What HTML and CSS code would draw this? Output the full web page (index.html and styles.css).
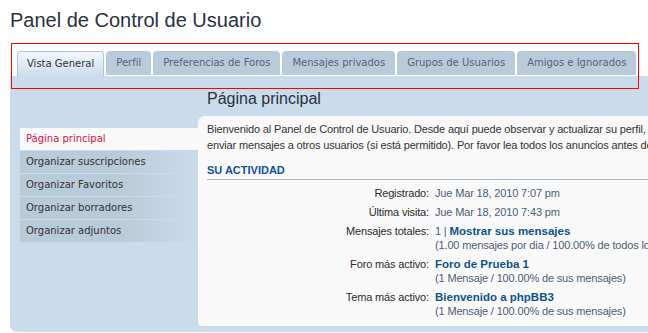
FILE: index.html
```html
<!DOCTYPE html>
<html lang="es">

<head>
  <meta charset="UTF-8" />
  <meta name="viewport" content="width=device-width, initial-scale=1.0" />
  <title>Panel de Control de Usuario</title>
  <link rel="stylesheet" href="styles.css">
</head>

<body>
  <div class="wrap">
    <h1>Panel de Control de Usuario</h1>

    <div class="tabs">
      <a class="tab active" href="#">Vista General</a>
      <a class="tab" href="#">Perfil</a>
      <a class="tab" href="#">Preferencias de Foros</a>
      <a class="tab" href="#">Mensajes privados</a>
      <a class="tab" href="#">Grupos de Usuarios</a>
      <a class="tab" href="#">Amigos e Ignorados</a>
    </div>

    <div class="panel">
      <ul class="menu">
        <li class="active">Página principal</li>
        <li>Organizar suscripciones</li>
        <li>Organizar Favoritos</li>
        <li>Organizar borradores</li>
        <li>Organizar adjuntos</li>
      </ul>

      <div class="main">
        <h2>Página principal</h2>
        <div class="inner">
          <p>Bienvenido al Panel de Control de Usuario. Desde aquí puede observar y actualizar su perfil, preferencias, foros a los que está suscrito, y<br>enviar mensajes a otros usuarios (si está permitido). Por favor lea todos los anuncios antes de hacer nada aquí.</p>

          <h3>Su actividad</h3>
          <dl class="details">
            <dt>Registrado:</dt>
            <dd>Jue Mar 18, 2010 7:07 pm</dd>
            <dt>Última visita:</dt>
            <dd>Jue Mar 18, 2010 7:43 pm</dd>
            <dt>Mensajes totales:</dt>
            <dd>1 | <a href="#">Mostrar sus mensajes</a><br>(1.00 mensajes por dia / 100.00% de todos los mensajes)</dd>
            <dt>Foro más activo:</dt>
            <dd><a href="#">Foro de Prueba 1</a><br>(1 Mensaje / 100.00% de sus mensajes)</dd>
            <dt>Tema más activo:</dt>
            <dd><a href="#">Bienvenido a phpBB3</a><br>(1 Mensaje / 100.00% de sus mensajes)</dd>
          </dl>
        </div>
      </div>
    </div>

    <div class="highlight"></div>
  </div>
</body>

</html>
```

FILE: styles.css
```css
html, body {
  overflow: hidden;
}
body {
  margin: 0;
  background: #fff;
  font-family: "Liberation Sans", Arial, sans-serif;
  color: #333;
}
.wrap {
  position: relative;
  width: 900px;
  padding: 8px 0 0 10px;
}
h1 {
  margin: 0;
  font-size: 20px;
  line-height: 24px;
  font-weight: normal;
  color: #28313f;
}
.tabs {
  display: flex;
  align-items: flex-start;
  gap: 2px;
  height: 25px;
  margin-top: 19px;
  padding-left: 7px;
}
.tab {
  display: block;
  height: 24px;
  line-height: 24px;
  padding: 0 10px;
  background: #b9cad9;
  color: #536482;
  font-family: "DejaVu Sans", Verdana, sans-serif;
  font-size: 10px;
  text-decoration: none;
  border-radius: 4px 4px 0 0;
}
.tab.active {
  height: 25px;
  line-height: 23px;
  padding: 0 9px;
  background: linear-gradient(#f3f7fa, #cadceb);
  color: #333;
  border: 1px solid #b3c5d5;
  border-bottom: 0;
}
.panel {
  display: grid;
  grid-template-columns: 178px 1fr;
  background: #cadceb;
  padding: 0 0 6px 10px;
  border-radius: 0 0 0 7px;
}
.menu {
  list-style: none;
  margin: 52px 0 0;
  padding: 0;
}
.menu li {
  height: 22px;
  line-height: 22px;
  margin-bottom: 1px;
  padding-left: 6px;
  background: linear-gradient(to right, #b9cad9 55%, #cadceb 100%);
  font-family: "DejaVu Sans", Verdana, sans-serif;
  font-size: 10px;
  color: #333;
}
.menu li.active {
  background: #f9f9f9;
  color: #d31141;
}
h2 {
  margin: 0 0 7px;
  padding: 13px 0 0 9px;
  font-size: 16px;
  line-height: 20px;
  font-weight: normal;
  color: #28313f;
}
.inner {
  background: #f9f9f9;
  border-radius: 7px 0 0 4px;
  padding: 5px 0 8px 9px;
  font-size: 11px;
}
.inner p {
  margin: 0;
  line-height: 16px;
  letter-spacing: -0.15px;
  white-space: nowrap;
}
h3 {
  margin: 9px 0 0;
  padding-bottom: 1px;
  border-bottom: 1px solid #a9b8c6;
  font-size: 11px;
  line-height: 16px;
  text-transform: uppercase;
  color: #115098;
}
.details {
  display: grid;
  grid-template-columns: 222px auto;
  column-gap: 6px;
  margin: 1px 0 0;
}
.details dt,
.details dd {
  margin: 5px 0 0;
  line-height: 14px;
  letter-spacing: -0.15px;
  white-space: nowrap;
}
.details dt {
  text-align: right;
  color: #2b2b2b;
}
.details dd {
  color: #4c5d77;
}
.details a {
  color: #105289;
  font-weight: bold;
  font-size: 11.5px;
  line-height: 14px;
  letter-spacing: 0;
  text-decoration: none;
}
.highlight {
  position: absolute;
  left: 11px;
  top: 43px;
  width: 628px;
  height: 46px;
  box-sizing: border-box;
  border: 1px solid #f00;
}
```
